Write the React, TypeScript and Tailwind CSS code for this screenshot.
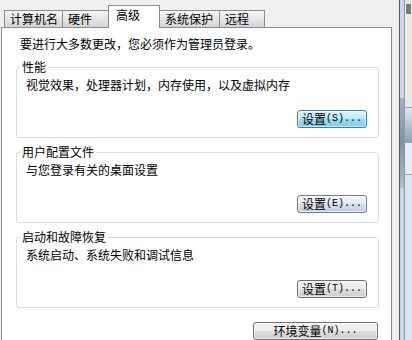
const cjk = "font-['Noto_Sans_CJK_SC',sans-serif]";

function Tab({ label, w, active }: { label: string; w: string; active?: boolean }) {
  if (active) {
    return (
      <div
        className={`relative z-10 -mb-px -ml-px h-[23px] border border-b-0 border-[#898c95] bg-white pl-[7px] pt-[2px] text-[12px] leading-[14px] text-black ${w}`}
      >
        {label}
      </div>
    );
  }
  return (
    <div
      className={`-ml-px first:ml-0 h-[17px] border border-b-0 border-[#898c95] bg-[linear-gradient(to_bottom,#f6f6f6,#e4e4e4_55%,#d2d2d2)] pl-[5px] pt-[1px] text-[12px] leading-[14px] text-black ${w}`}
    >
      {label}
    </div>
  );
}

function Btn({
  zh,
  key_,
  w = "w-[70px]",
  tone = "gray",
}: {
  zh: string;
  key_: string;
  w?: string;
  tone?: "blue" | "soft" | "gray";
}) {
  const skin =
    tone === "blue"
      ? "border-[#3c7fb1] bg-[linear-gradient(to_bottom,#def4fd,#bde8fb_48%,#98d8f6_52%,#80cdf1)]"
      : tone === "soft"
        ? "border-[#6f7f8f] bg-[linear-gradient(to_bottom,#f3f6f9,#e3eaf0_48%,#d2dde7_52%,#c4d2de)]"
        : "border-[#707070] bg-[linear-gradient(to_bottom,#f2f2f2,#ebebeb_48%,#dddddd_52%,#cfcfcf)]";
  return (
    <div
      className={`flex h-[18px] items-center justify-center rounded-[3px] border shadow-[inset_0_0_0_1px_rgba(255,255,255,0.55)] ${skin} ${w}`}
    >
      <span className="text-[12px] leading-none text-black">{zh}</span>
      <span className="font-['Liberation_Mono',monospace] text-[10px] leading-none text-black">
        ({key_})...
      </span>
    </div>
  );
}

function Group({
  title,
  desc,
  btn,
  className = "",
}: {
  title: string;
  desc: string;
  btn: React.ReactNode;
  className?: string;
}) {
  return (
    <fieldset
      className={`ml-[14px] mr-[12px] rounded-[3px] border border-[#d5dfe5] pb-[9px] ${className}`}
    >
      <legend className="ml-[3px] px-[2px] text-[12px] leading-[16px] text-black">{title}</legend>
      <div className="mt-[2px] pl-[9px] text-[12px] leading-[16px] text-black">{desc}</div>
      <div className="mt-[17px] flex justify-end pr-[11px]">{btn}</div>
    </fieldset>
  );
}

export default function App() {
  return (
    <div className={`flex h-[340px] w-[412px] overflow-hidden bg-[#f0f0f0] ${cjk}`}>
      <div className="flex w-[399px] flex-col">
        <div className="flex h-[28px] items-end pl-[4px]">
          <Tab label="计算机名" w="w-[59px]" />
          <Tab label="硬件" w="w-[47px]" />
          <Tab label="高级" w="w-[52px]" active />
          <Tab label="系统保护" w="w-[61px]" />
          <Tab label="远程" w="w-[46px]" />
        </div>
        <div className="ml-[1px] w-[391px] flex-1 border border-b-0 border-[#898c95] bg-white pt-[8px]">
          <p className="pl-[18px] text-[12px] leading-[16px] text-black">
            要进行大多数更改，您必须作为管理员登录。
          </p>
          <Group
            className="mt-[7px]"
            title="性能"
            desc="视觉效果，处理器计划，内存使用，以及虚拟内存"
            btn={<Btn zh="设置" key_="S" tone="blue" />}
          />
          <Group
            className="mt-[6px]"
            title="用户配置文件"
            desc="与您登录有关的桌面设置"
            btn={<Btn zh="设置" key_="E" tone="soft" />}
          />
          <Group
            className="mt-[6px]"
            title="启动和故障恢复"
            desc="系统启动、系统失败和调试信息"
            btn={<Btn zh="设置" key_="T" />}
          />
          <div className="mr-[13px] mt-[14px] flex justify-end">
            <Btn zh="环境变量" key_="N" w="w-[125px]" />
          </div>
        </div>
      </div>
      <div className="flex w-[13px] border-l border-[#55606b]">
        <div className="flex w-[4px] flex-col">
          <div className="h-[98px] bg-[#c9d8e8]" />
          <div className="h-[90px] bg-[linear-gradient(to_bottom,#9fb3c6,#7d93a8_50%,#a9bccd)]" />
          <div className="flex-1 bg-[#c4d6ea]" />
        </div>
        <div className="flex flex-1 flex-col border-l border-[#8c99a6]">
          <div className="h-[4px] bg-[#e4e1d8]" />
          <div className="mx-[1px] h-[10px] bg-[#7a7a7a]" />
          <div className="h-[93px] bg-[#ebe8df]" />
          <div className="h-[36px] border-y border-[#9aa7b3] bg-[linear-gradient(to_bottom,#dfe6ec,#8ea2b4)]" />
          <div className="h-[32px] border-b border-[#9aa7b3] bg-[#e6ecf2]" />
          <div className="flex-1 bg-[#dbe5ef]" />
        </div>
      </div>
    </div>
  );
}
